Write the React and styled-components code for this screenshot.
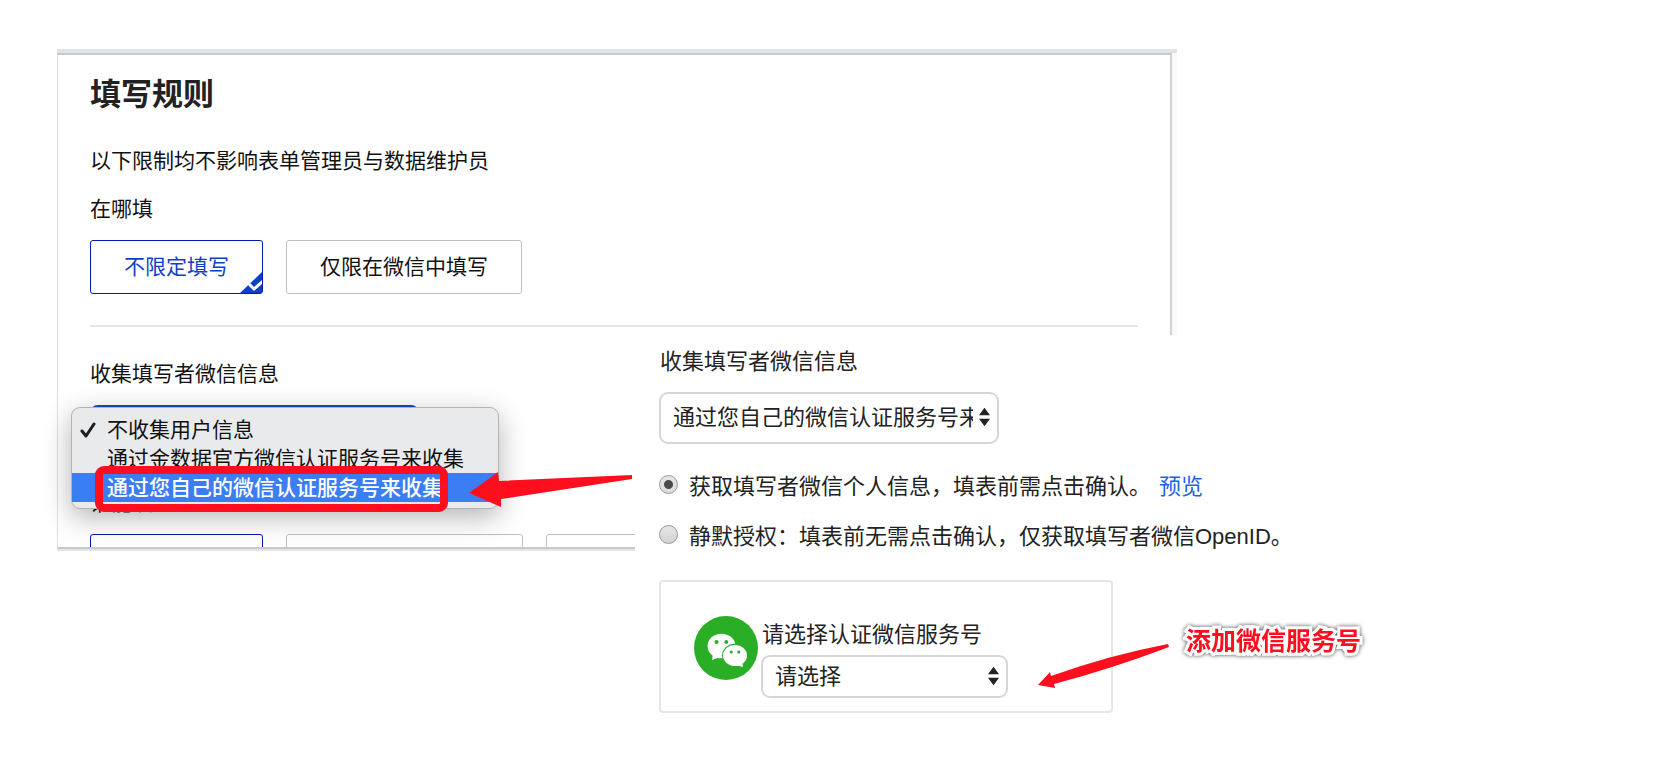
import { useState } from "react";
import styled, { createGlobalStyle } from "styled-components";

const collectOptions = [
    "不收集用户信息",
    "通过金数据官方微信认证服务号来收集",
    "通过您自己的微信认证服务号来收集",
];

export default function App() {
    const [place, setPlace] = useState("any");
    const [active, setActive] = useState(2);
    const [mode, setMode] = useState("profile");

    return (
        <Page>
            <GlobalStyle />
            <Window>
                <Body>
                    <Title>填写规则</Title>
                    <Hint>以下限制均不影响表单管理员与数据维护员</Hint>
                    <Label>在哪填</Label>
                    <OptionRow>
                        <Option $selected={place === "any"} onClick={() => setPlace("any")}>
                            不限定填写
                            {place === "any" && <CornerCheck />}
                        </Option>
                        <Option $selected={place === "wechat"} onClick={() => setPlace("wechat")}>
                            仅限在微信中填写
                            {place === "wechat" && <CornerCheck />}
                        </Option>
                    </OptionRow>
                    <Divider />
                    <Label id='collect-label'>收集填写者微信信息</Label>
                    <SelectAnchor>
                        <CollectTrigger aria-labelledby='collect-label' aria-haspopup='listbox' />
                        <Menu role='listbox' aria-labelledby='collect-label'>
                            {collectOptions.map((item, i) => (
                                <MenuItem
                                    key={item}
                                    role='option'
                                    aria-selected={i === 0}
                                    $active={i === active}
                                    onMouseEnter={() => setActive(i)}>
                                    <Tick>{i === 0 && <TickIcon />}</Tick>
                                    {item}
                                </MenuItem>
                            ))}
                            <Highlight />
                        </Menu>
                    </SelectAnchor>
                    <Label>谁能填</Label>
                    <CutRow>
                        <CutOption $selected $width={173} />
                        <CutOption $width={237} />
                        <CutOption $width={237} />
                    </CutRow>
                </Body>
            </Window>

            <Sheet>
                <SheetLabel htmlFor='collect'>收集填写者微信信息</SheetLabel>
                <SelectBox $width={340}>
                    <Select id='collect' $height={52}>
                        <option>通过您自己的微信认证服务号来收集</option>
                    </Select>
                    <Stepper />
                </SelectBox>
                <RadioList>
                    <RadioRow>
                        <Radio id='profile' name='mode' checked={mode === "profile"} onChange={() => setMode("profile")} />
                        <label htmlFor='profile'>获取填写者微信个人信息，填表前需点击确认。</label>
                        <Preview href='#preview'>预览</Preview>
                    </RadioRow>
                    <RadioRow>
                        <Radio id='silent' name='mode' checked={mode === "silent"} onChange={() => setMode("silent")} />
                        <label htmlFor='silent'>静默授权：填表前无需点击确认，仅获取填写者微信OpenID。</label>
                    </RadioRow>
                </RadioList>
                <CardRow>
                    <Card>
                        <WechatIcon />
                        <Account>
                            <AccountLabel htmlFor='account'>请选择认证微信服务号</AccountLabel>
                            <SelectBox $width={247}>
                                <Select id='account' $height={43}>
                                    <option>请选择</option>
                                </Select>
                                <Stepper />
                            </SelectBox>
                        </Account>
                    </Card>
                    <Callout>添加微信服务号</Callout>
                    <CardArrow viewBox='0 0 132 46' aria-hidden='true'>
                        <path d='M0 41L12 28L13 32Q72 11 130 0L131 3Q73 25 16 40L17 44Z' />
                    </CardArrow>
                </CardRow>
            </Sheet>

            <MenuArrow viewBox='0 0 164 36' aria-hidden='true'>
                <path d='M0 21L29 0L30 9L163 3V7L32 27V35Z' />
            </MenuArrow>
        </Page>
    );
}

function CornerCheck() {
    return (
        <Corner viewBox='0 0 22 21' aria-hidden='true'>
            <path d='M22 0V21H0Z' fill='#0f3fc4' />
            <path d='M9 12L14 17L23 9' fill='none' stroke='#fff' strokeWidth='3' />
        </Corner>
    );
}

function TickIcon() {
    return (
        <svg width='18' height='18' viewBox='0 0 18 18' aria-hidden='true'>
            <path d='M2 10L6 15L14 3' fill='none' stroke='#1d1d1d' strokeWidth='3' strokeLinecap='round' strokeLinejoin='round' />
        </svg>
    );
}

function Stepper() {
    return (
        <StepperIcon viewBox='0 0 12 20' aria-hidden='true'>
            <path d='M6 0L12 8H0ZM0 12H12L6 20Z' />
        </StepperIcon>
    );
}

function WechatIcon() {
    return (
        <Logo viewBox='0 0 64 64' aria-hidden='true'>
            <circle cx='32' cy='32' r='32' fill='#2aae26' />
            <g fill='#fff'>
                <ellipse cx='27.5' cy='30' rx='14' ry='12.3' />
                <path d='M19 37L18 44L26 41Z' />
            </g>
            <ellipse cx='41' cy='39.5' rx='13' ry='11.8' fill='#2aae26' />
            <g fill='#fff'>
                <ellipse cx='41' cy='39.5' rx='12' ry='10.6' />
                <path d='M42 49L49 51L48 45Z' />
            </g>
            <g fill='#2aae26'>
                <circle cx='22.5' cy='26' r='2' />
                <circle cx='32.3' cy='26' r='2' />
                <circle cx='37.2' cy='36' r='1.6' />
                <circle cx='44.8' cy='36' r='1.6' />
            </g>
        </Logo>
    );
}

const GlobalStyle = createGlobalStyle`
    * {
        box-sizing: border-box;
    }
    body {
        margin: 0;
        background: #fff;
        color: #111;
        font-family: "Liberation Sans", "Noto Sans CJK SC", sans-serif;
        font-size: 21px;
        line-height: 32px;
    }
    button, select, input {
        font: inherit;
        color: inherit;
        margin: 0;
    }
`;

const Page = styled.main`
    position: relative;
    min-height: 100vh;
    padding: 49px 57px;
    overflow: hidden;
`;

const Window = styled.section`
    max-width: 1120px;
    padding-right: 5px;
    background: #fafafa;
    border-top: 4px solid #dfe4e9;
    border-bottom: 2px solid #e1e5e9;
`;

const Body = styled.div`
    padding: 20px 32px 0;
    background: #fff;
    border: solid #c9c9c9;
    border-width: 2px 2px 2px 1px;
    border-left-color: #dedede;
    border-right-color: #d2d2d2;
`;

const Title = styled.h1`
    margin: 0 0 30px;
    font-size: 31px;
    font-weight: 700;
    line-height: 40px;
    color: #222;
`;

const Hint = styled.p`
    margin: 0 0 16px;
`;

const Label = styled.div`
    margin-bottom: 15px;
`;

const OptionRow = styled.div`
    display: flex;
    gap: 23px;
`;

const Option = styled.button`
    position: relative;
    height: 54px;
    padding: 0 33px;
    background: #fff;
    border: 1px solid ${(props) => (props.$selected ? "#0018b4" : "#c0c0c0")};
    border-radius: 3px;
    color: ${(props) => (props.$selected ? "#0f3fc4" : "#111")};
    cursor: pointer;
`;

const Corner = styled.svg`
    position: absolute;
    right: 0;
    bottom: 0;
    width: 22px;
    height: 21px;
`;

const Divider = styled.hr`
    height: 2px;
    margin: 31px 0;
    border: none;
    background: #e6e6e6;
`;

const SelectAnchor = styled.div`
    position: relative;
    margin-bottom: 30px;
`;

const CollectTrigger = styled.button`
    display: block;
    width: 329px;
    height: 52px;
    background: #fff;
    border: 2px solid #1a46c4;
    border-radius: 8px;
`;

const Menu = styled.ul`
    position: absolute;
    z-index: 1;
    top: 2px;
    left: -19px;
    width: 428px;
    margin: 0;
    padding: 7px 0 6px;
    list-style: none;
    background: #e9eaeb;
    border: 1px solid #b4b4b4;
    border-radius: 9px;
    box-shadow: 0 8px 28px rgba(0, 0, 0, 0.3);
`;

const MenuItem = styled.li`
    display: flex;
    align-items: center;
    height: 29px;
    padding-left: 8px;
    line-height: 28px;
    font-weight: ${(props) => (props.$active ? 500 : 400)};
    color: ${(props) => (props.$active ? "#fff" : "#111")};
    background: ${(props) => (props.$active ? "#3b7df2" : "transparent")};
    white-space: nowrap;
`;

const Tick = styled.span`
    display: flex;
    width: 27px;
`;

/* marker frame round the last menu item */
const Highlight = styled.li`
    position: absolute;
    left: 23px;
    right: 50px;
    bottom: -4px;
    height: 46px;
    border: 8px solid #ff0f1e;
    border-radius: 9px;
    pointer-events: none;
`;

const CutRow = styled.div`
    display: flex;
    gap: 23px;
    height: 13px;
    overflow: hidden;
`;

const CutOption = styled(Option)`
    flex: none;
    width: ${(props) => props.$width}px;
`;

const Sheet = styled.section`
    position: absolute;
    z-index: 2;
    top: 335px;
    left: 635px;
    right: 0;
    padding: 11px 24px 68px;
    background: #fff;
    color: #222;
    font-size: 22px;
`;

const SheetLabel = styled.label`
    display: block;
    padding-left: 1px;
    margin-bottom: 14px;
`;

const SelectBox = styled.div`
    position: relative;
    width: ${(props) => props.$width}px;
`;

const Select = styled.select`
    appearance: none;
    display: block;
    width: 100%;
    height: ${(props) => props.$height}px;
    padding: 0 24px 0 12px;
    background: #fff;
    border: 2px solid #d6d6d6;
    border-radius: 9px;
`;

const StepperIcon = styled.svg`
    position: absolute;
    top: 50%;
    right: 9px;
    width: 11px;
    height: 20px;
    margin-top: -11px;
    fill: #222;
    pointer-events: none;
`;

const RadioList = styled.div`
    display: flex;
    flex-direction: column;
    gap: 18px;
    margin: 27px 0;
`;

const RadioRow = styled.div`
    display: flex;
    align-items: center;
    white-space: nowrap;
`;

const Radio = styled.input.attrs({ type: "radio" })`
    appearance: none;
    width: 19px;
    height: 19px;
    margin: 0 11px 5px 0;
    border: 1px solid #999;
    border-radius: 50%;
    background: linear-gradient(#e6e6e6, #d2d2d2);
    &:checked {
        background: radial-gradient(circle, #4a4a4a 4px, transparent 5px), linear-gradient(#e6e6e6, #dcdcdc);
    }
`;

const Preview = styled.a`
    margin-left: 8px;
    color: #1f5fe8;
    text-decoration: none;
`;

const CardRow = styled.div`
    position: relative;
    display: flex;
    align-items: flex-start;
    gap: 73px;
`;

const Card = styled.div`
    display: flex;
    width: 454px;
    padding: 34px 33px 13px;
    border: 2px solid #e6e6e6;
    border-radius: 4px;
`;

const Logo = styled.svg`
    flex: none;
    width: 64px;
    height: 64px;
    margin-right: 3px;
`;

const Account = styled.div`
    padding-top: 3px;
`;

const AccountLabel = styled.label`
    display: block;
    padding-left: 1px;
    margin-bottom: 4px;
`;

const Callout = styled.strong`
    margin-top: 45px;
    font-size: 25px;
    font-weight: 700;
    color: #ff0f1e;
    -webkit-text-stroke: 6px #fff;
    paint-order: stroke fill;
    filter: drop-shadow(0 0 2px rgba(0, 0, 0, 0.7));
    white-space: nowrap;
`;

const CardArrow = styled.svg`
    position: absolute;
    top: 64px;
    left: 379px;
    width: 132px;
    height: 46px;
    fill: #ff0f1e;
`;

const MenuArrow = styled.svg`
    position: absolute;
    z-index: 3;
    top: 472px;
    left: 469px;
    width: 164px;
    height: 36px;
    fill: #ff0f1e;
`;
